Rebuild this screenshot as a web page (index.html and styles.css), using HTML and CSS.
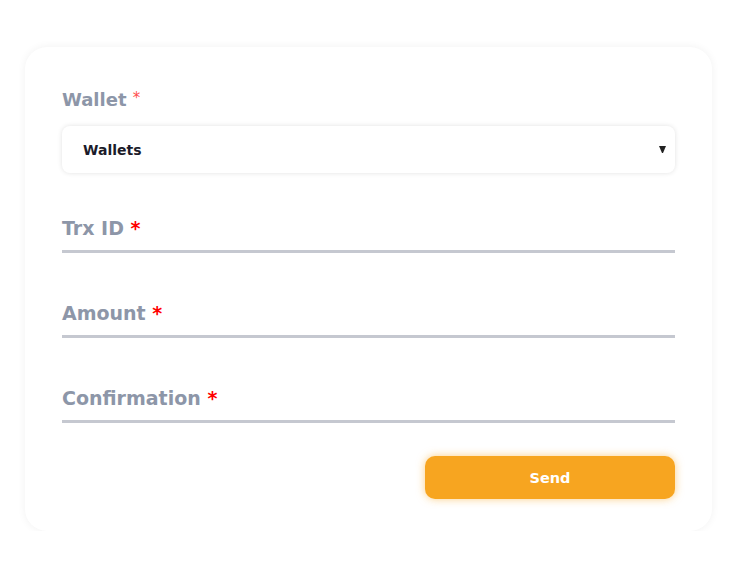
FILE: index.html
```html
<!DOCTYPE html>
<html>
<head>
<meta charset="utf-8">
<link rel="stylesheet" href="styles.css">
</head>
<body>
<div class="card">
  <div class="label wallet-label">Wallet <span class="req-thin">*</span></div>
  <div class="select">
    <span class="select-text">Wallets</span>
    <svg class="caret" width="7" height="7" viewBox="0 0 7 7"><path d="M0 0 H7 L4 7 H3 Z" fill="#222"/></svg>
  </div>
  <div class="field first">
    <div class="label">Trx ID <span class="req">*</span></div>
    <div class="line"></div>
  </div>
  <div class="field">
    <div class="label">Amount <span class="req">*</span></div>
    <div class="line"></div>
  </div>
  <div class="field">
    <div class="label">Confirmation <span class="req">*</span></div>
    <div class="line"></div>
  </div>
  <div class="actions">
    <button class="send">Send</button>
  </div>
</div>
</body>
</html>
```
FILE: styles.css
```css
html, body {
  margin: 0;
  padding: 0;
  background: #ffffff;
}
body {
  font-family: "DejaVu Sans", "Noto Sans", sans-serif;
  padding-top: 47px;
  padding-left: 25px;
}
.card {
  width: 687px;
  height: 484px;
  box-sizing: border-box;
  background: #ffffff;
  border-radius: 22px;
  box-shadow: 0 0 8px rgba(0, 0, 0, 0.06);
  padding: 40px 37px 32px 37px;
  display: flex;
  flex-direction: column;
}
.label {
  font-size: 19px;
  line-height: 22px;
  font-weight: bold;
  color: #8d96a8;
  height: 22px;
}
.wallet-label {
  font-size: 18px;
}
.req-thin {
  color: #ff4d4d;
  font-weight: normal;
  font-size: 15px;
  vertical-align: 3px;
}
.req {
  color: #ff0000;
  font-weight: bold;
}
.select {
  margin-top: 17px;
  height: 48px;
  border-radius: 8px;
  box-shadow: 0 0 5px rgba(0, 0, 0, 0.12);
  display: flex;
  align-items: center;
  justify-content: space-between;
  padding: 0 9px 0 21px;
}
.select-text {
  font-size: 14px;
  font-weight: bold;
  color: #1b1b2a;
}
.caret {
  display: block;
}
.field {
  margin-top: 49px;
}
.field.first {
  margin-top: 44px;
}
.line {
  margin-top: 11px;
  height: 3px;
  background: #c5c8d0;
}
.actions {
  margin-top: 33px;
  display: flex;
  justify-content: flex-end;
}
.send {
  width: 250px;
  height: 43px;
  border: none;
  border-radius: 10px;
  background: #f7a520;
  color: #ffffff;
  font-family: "DejaVu Sans", "Noto Sans", sans-serif;
  font-size: 14.5px;
  font-weight: bold;
  box-shadow: 0 0 8px rgba(247, 165, 32, 0.55);
}
```
